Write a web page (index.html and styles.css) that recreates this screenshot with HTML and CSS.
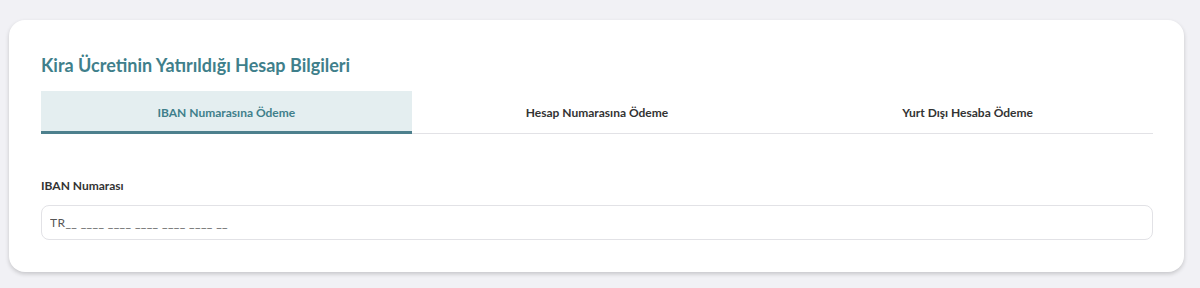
FILE: index.html
```html
<!DOCTYPE html>
<html lang="tr">
<head>
  <meta charset="UTF-8">
  <meta name="viewport" content="width=device-width, initial-scale=1.0">
  <title>Hesap Bilgileri</title>
  <link rel="stylesheet" href="styles.css">
</head>
<body>
  <div class="page">
    <section class="card">
      <h2 class="card-title">Kira Ücretinin Yatırıldığı Hesap Bilgileri</h2>

      <div class="tabs">
        <button class="tab tab-active">IBAN Numarasına Ödeme</button>
        <button class="tab">Hesap Numarasına Ödeme</button>
        <button class="tab">Yurt Dışı Hesaba Ödeme</button>
      </div>

      <div class="field">
        <label class="field-label" for="iban">IBAN Numarası</label>
        <input class="field-input" id="iban" type="text" placeholder="TR__ ____ ____ ____ ____ ____ __">
      </div>
    </section>
  </div>
</body>
</html>
```

FILE: styles.css
```css
:root {
  --teal: #3f7f8b;
  --teal-line: #4d808d;
  --teal-bg: #e4eef0;
  --text: #333333;
  --muted: #555555;
  --border: #e2e2e6;
  --page-bg: #f1f1f5;
}

* {
  margin: 0;
  padding: 0;
  box-sizing: border-box;
}

body {
  font-family: 'Source Sans Pro', Lato, 'Liberation Sans', sans-serif;
  background-color: var(--page-bg);
  color: var(--text);
}

.page {
  padding: 20px 16px 16px 9px;
}

.card {
  background-color: #fff;
  border-radius: 16px;
  box-shadow: 0 2px 4px rgba(0, 0, 0, 0.18);
  padding: 34px 31px 32px 32px;
  height: 252px;
}

.card-title {
  font-size: 18px;
  font-weight: 700;
  color: var(--teal);
  line-height: 22px;
  margin-bottom: 15px;
}

.tabs {
  display: grid;
  grid-template-columns: repeat(3, 1fr);
  border-bottom: 1px solid var(--border);
}

.tab {
  font-family: inherit;
  font-size: 12px;
  font-weight: 700;
  color: var(--text);
  background: none;
  border: none;
  border-bottom: 3px solid transparent;
  height: 43px;
  padding-top: 3px;
  margin-bottom: -1px;
  cursor: pointer;
}

.tab-active {
  background-color: var(--teal-bg);
  border-bottom-color: var(--teal-line);
  color: var(--teal);
}

.field {
  margin-top: 44px;
  display: flex;
  flex-direction: column;
}

.field-label {
  font-size: 12px;
  font-weight: 700;
  color: var(--text);
  line-height: 16px;
  margin-bottom: 11px;
}

.field-input {
  font-family: inherit;
  font-size: 12px;
  height: 35px;
  padding: 0 8px;
  border: 1px solid var(--border);
  border-radius: 8px;
  color: var(--text);
  outline: none;
}

.field-input::placeholder {
  color: var(--muted);
  letter-spacing: 0.4px;
}
```
